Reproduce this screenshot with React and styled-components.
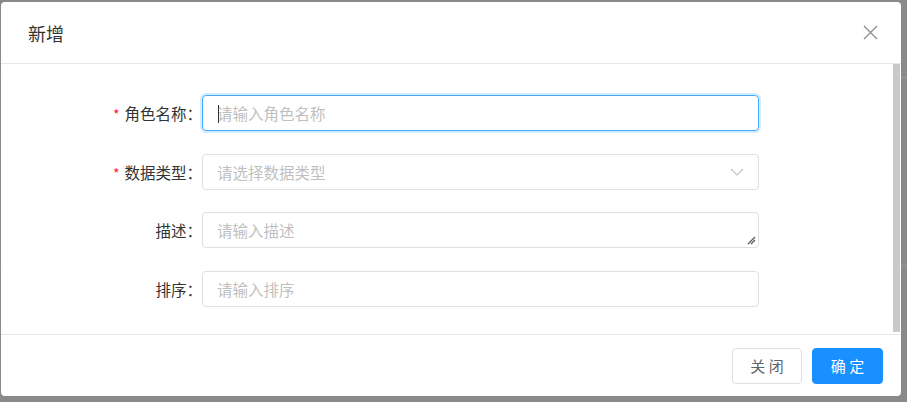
import styled, { createGlobalStyle } from "styled-components";

const GlobalStyle = createGlobalStyle`
  html, body {
    margin: 0;
    padding: 0;
  }
  body {
    width: 907px;
    height: 402px;
    overflow: hidden;
    background-color: #8a8a8a;
    background-image:
      linear-gradient(#989898, #989898),
      linear-gradient(#989898, #989898);
    background-size: 100% 1px, 100% 1px;
    background-position: 0 77px, 0 265px;
    background-repeat: no-repeat;
    font-family: "Noto Sans CJK SC", "Noto Sans", sans-serif;
  }
  * {
    box-sizing: border-box;
  }
`;

const fields = [
  { label: "角色名称", placeholder: "请输入角色名称", required: true, kind: "input", focused: true },
  { label: "数据类型", placeholder: "请选择数据类型", required: true, kind: "select" },
  { label: "描述", placeholder: "请输入描述", kind: "textarea" },
  { label: "排序", placeholder: "请输入排序", kind: "input" },
];

const App = () => {
  return (
    <>
      <GlobalStyle />
      <Page>
        <Dialog>
          <Header>
            <Title>新增</Title>
            <CloseButton aria-label="close">
              <svg width="15" height="15" viewBox="0 0 15 15">
                <path d="M1 1 L14 14 M14 1 L1 14" stroke="#8c8c8c" strokeWidth="1.3" fill="none" />
              </svg>
            </CloseButton>
          </Header>
          <Body>
            <Form>
              {fields.map((f) => (
                <Row key={f.label}>
                  <Label>
                    {f.required && <Star>*</Star>}
                    {f.label}：
                  </Label>
                  <Field $focused={f.focused}>
                    {f.focused && <Caret />}
                    <Placeholder>{f.placeholder}</Placeholder>
                    {f.kind === "select" && (
                      <svg width="14" height="8" viewBox="0 0 14 8">
                        <path d="M1 1 L7 7 L13 1" stroke="#c0c4cc" strokeWidth="1.2" fill="none" />
                      </svg>
                    )}
                    {f.kind === "textarea" && (
                      <Grip>
                        <svg width="9" height="9" viewBox="0 0 9 9">
                          <path d="M1 8 L8 1 M4 8 L8 4" stroke="#555" strokeWidth="1.2" fill="none" />
                        </svg>
                      </Grip>
                    )}
                  </Field>
                </Row>
              ))}
            </Form>
            <Scrollbar />
          </Body>
          <Footer>
            <Button>关 闭</Button>
            <Button $primary>确 定</Button>
          </Footer>
        </Dialog>
      </Page>
    </>
  );
};

const Page = styled.div`
  padding: 2px 6px 6px 1px;
`;

const Dialog = styled.div`
  width: 900px;
  height: 394px;
  background: #fff;
  border-radius: 4px;
  display: flex;
  flex-direction: column;
  overflow: hidden;
`;

const Header = styled.div`
  height: 62px;
  flex: none;
  display: flex;
  align-items: center;
  justify-content: space-between;
  padding: 0 23px 0 27px;
  border-bottom: 1px solid #e8e8e8;
`;

const Title = styled.div`
  font-size: 18px;
  color: #333;
`;

const CloseButton = styled.div`
  display: flex;
  align-items: center;
  width: 15px;
  height: 15px;
`;

const Body = styled.div`
  flex: 1;
  display: flex;
  min-height: 0;
`;

const Form = styled.div`
  flex: 1;
  display: flex;
  flex-direction: column;
  gap: 22.7px;
  padding-top: 31px;
`;

const Row = styled.div`
  display: grid;
  grid-template-columns: 197px 557px;
  column-gap: 4px;
  height: 36px;
  align-items: center;
`;

const Label = styled.div`
  text-align: right;
  font-size: 15.5px;
  color: #333;
  margin-right: -4px;
`;

const Star = styled.span`
  color: #f5222d;
  margin-right: 5px;
  font-size: 14px;
`;

const Field = styled.div`
  position: relative;
  height: 36px;
  display: flex;
  align-items: center;
  justify-content: space-between;
  padding: 0 14px 0 14px;
  border: 1px solid ${(p) => (p.$focused ? "#40a9ff" : "#dcdfe6")};
  border-radius: 4px;
  box-shadow: ${(p) => (p.$focused ? "0 0 0 2px rgba(24,144,255,0.18)" : "none")};
`;

const Caret = styled.span`
  position: absolute;
  left: 15px;
  top: 9px;
  width: 1px;
  height: 18px;
  background: #333;
`;

const Placeholder = styled.span`
  font-size: 15.5px;
  color: #bfbfbf;
`;

const Grip = styled.span`
  position: absolute;
  right: 2px;
  bottom: 2px;
  display: flex;
`;

const Scrollbar = styled.div`
  width: 7px;
  margin-right: 1px;
  background: #c9c9c9;
  margin-bottom: 2px;
`;

const Footer = styled.div`
  height: 62px;
  flex: none;
  display: flex;
  align-items: center;
  justify-content: flex-end;
  gap: 10px;
  padding: 0 18px 0 0;
  border-top: 1px solid #e8e8e8;
`;

const Button = styled.div`
  width: ${(p) => (p.$primary ? "71px" : "70px")};
  height: 36px;
  border-radius: 4px;
  display: flex;
  align-items: center;
  justify-content: center;
  font-size: 15px;
  color: ${(p) => (p.$primary ? "#fff" : "#606266")};
  background: ${(p) => (p.$primary ? "#1890ff" : "#fff")};
  border: 1px solid ${(p) => (p.$primary ? "#1890ff" : "#dcdfe6")};
`;

export default App;
